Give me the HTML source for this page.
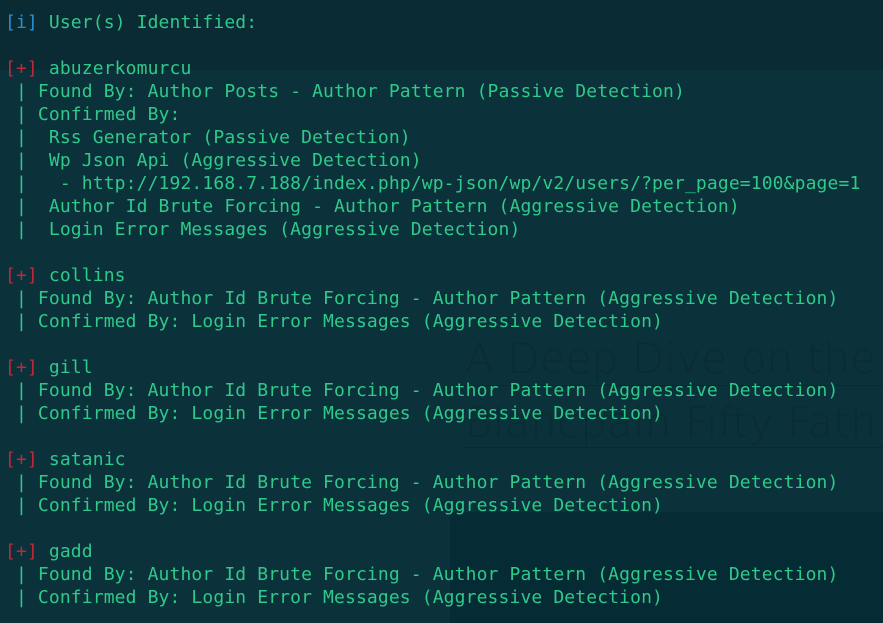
<!DOCTYPE html>
<html><head><meta charset="utf-8"><style>
html,body{margin:0;padding:0;width:883px;height:623px;overflow:hidden}
body{background:#0b313b;position:relative;font-family:"DejaVu Sans Mono","Liberation Mono",monospace;font-size:18px;letter-spacing:0.13px;color:#2fc98a}
.bg1{position:absolute;left:0;top:0;width:883px;height:70px;background:#0a2b34}
.bg2{position:absolute;left:450px;top:512px;width:433px;height:111px;background:#052b34}
.bgt{position:absolute;color:#0a2c35;font-family:"DejaVu Sans","Liberation Sans",sans-serif;font-weight:300;white-space:nowrap}
pre{position:absolute;left:5px;top:11px;margin:0;font:inherit;line-height:23px;white-space:pre}
.b{color:#2a8fd0}.r{color:#c0283a}
</style></head><body>
<div class="bg1"></div><div class="bg2"></div>
<div class="bgt" style="left:465px;top:334px;font-size:42px">A Deep Dive on the</div>
<div class="bgt" style="left:465px;top:398px;font-size:42px">Blancpain Fifty Fath</div>
<div style="position:absolute;left:465px;top:385px;width:418px;height:1px;background:#0a2a33"></div>
<div style="position:absolute;left:465px;top:447px;width:418px;height:1px;background:#0a2a33"></div>
<pre><span class="b">[i]</span> User(s) Identified:

<span class="r">[+]</span> abuzerkomurcu
 | Found By: Author Posts - Author Pattern (Passive Detection)
 | Confirmed By:
 |  Rss Generator (Passive Detection)
 |  Wp Json Api (Aggressive Detection)
 |   - http://192.168.7.188/index.php/wp-json/wp/v2/users/?per_page=100&amp;page=1
 |  Author Id Brute Forcing - Author Pattern (Aggressive Detection)
 |  Login Error Messages (Aggressive Detection)

<span class="r">[+]</span> collins
 | Found By: Author Id Brute Forcing - Author Pattern (Aggressive Detection)
 | Confirmed By: Login Error Messages (Aggressive Detection)

<span class="r">[+]</span> gill
 | Found By: Author Id Brute Forcing - Author Pattern (Aggressive Detection)
 | Confirmed By: Login Error Messages (Aggressive Detection)

<span class="r">[+]</span> satanic
 | Found By: Author Id Brute Forcing - Author Pattern (Aggressive Detection)
 | Confirmed By: Login Error Messages (Aggressive Detection)

<span class="r">[+]</span> gadd
 | Found By: Author Id Brute Forcing - Author Pattern (Aggressive Detection)
 | Confirmed By: Login Error Messages (Aggressive Detection)</pre>
</body></html>
